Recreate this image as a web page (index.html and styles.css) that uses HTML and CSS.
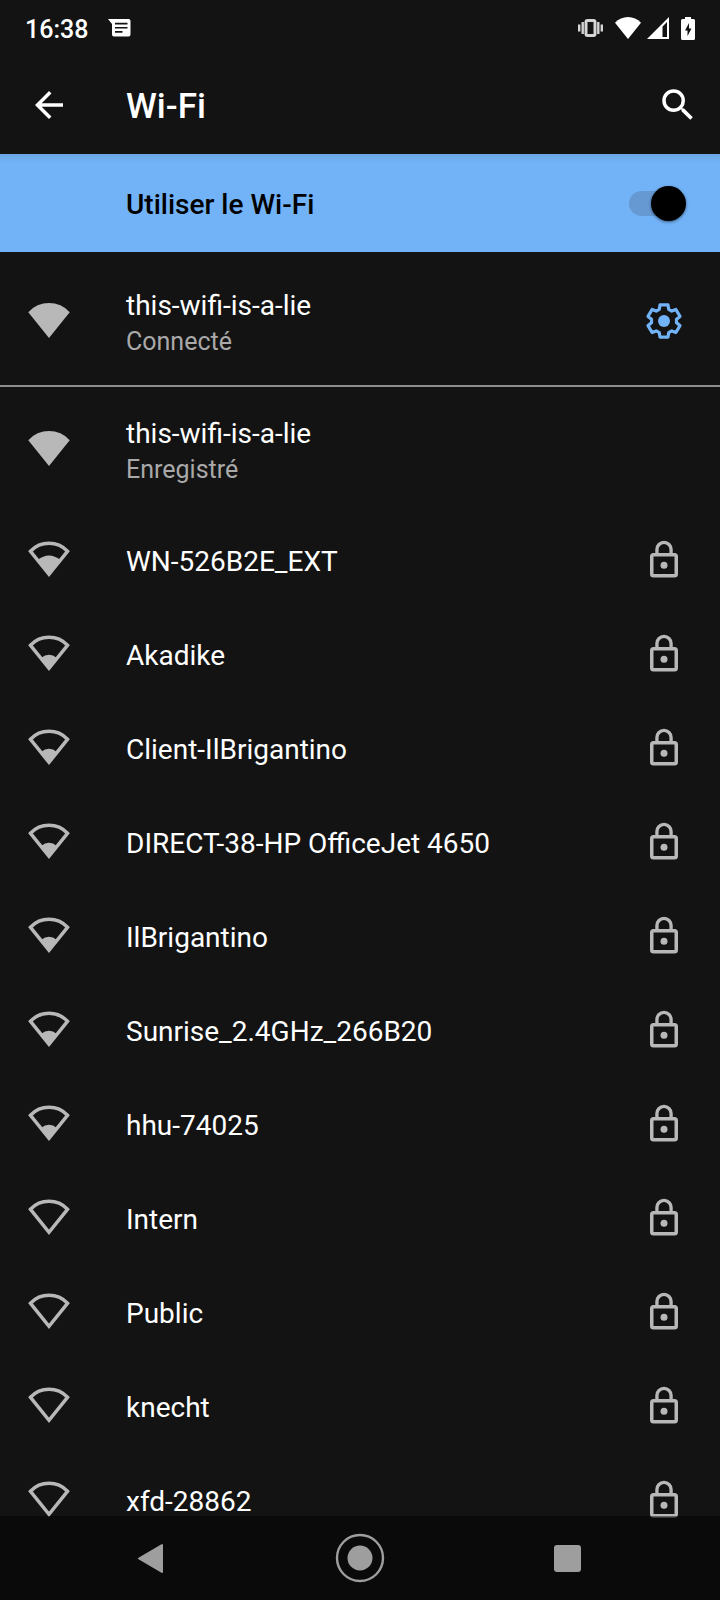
FILE: index.html
```html
<!DOCTYPE html>
<html lang="fr">
<head>
<meta charset="utf-8">
<meta name="viewport" content="width=device-width, initial-scale=1">
<title>Wi-Fi</title>
<link rel="stylesheet" href="styles.css">
</head>
<body>
<svg class="sprite" aria-hidden="true">
  <symbol id="wifi-4" viewBox="0 0 42 42"><path d="M.3 12.300A27.500 27.500 0 0 1 41.700 12.300L21 38z"/></symbol>
  <symbol id="wifi-0" viewBox="0 0 42 42"><path fill="none" stroke="currentColor" stroke-width="3.500" d="M2.500 12.300A25.500 25.500 0 0 1 39.500 12.300L21 35.300z"/></symbol>
  <symbol id="wifi-1" viewBox="0 0 42 42"><use href="#wifi-0"/><path d="M13 25Q21 18.500 29 25L21 36z"/></symbol>
  <symbol id="wifi-2" viewBox="0 0 42 42"><use href="#wifi-0"/><path d="M9.500 21Q21 12 32.500 21L21 36z"/></symbol>
  <symbol id="lock" viewBox="0 0 24 24"><path fill-rule="evenodd" d="M18 8h-1V6A5 5 0 0 0 7 6v2H6a2 2 0 0 0-2 2v10a2 2 0 0 0 2 2h12a2 2 0 0 0 2-2V10a2 2 0 0 0-2-2zM8.900 6a3.100 3.100 0 0 1 6.200 0v2H8.900zM18 20H6V10h12z"/><circle cx="12" cy="15" r="2"/></symbol>
</svg>

<header>
  <div class="status">
    <time>16:38</time>
    <svg class="chat" viewBox="0 0 23 18" aria-hidden="true"><path fill-rule="evenodd" d="M0 0H20.500A2 2 0 0 1 22.500 2V15.500A2 2 0 0 1 20.500 17.500H6A2 2 0 0 1 4 15.500V5zM7 3.800V5.500H19.500V3.800zM7 7.900V9.600H19.500V7.900zM7 12V13.700H14.500V12z"/></svg>
    <div class="indicators">
      <svg class="vibrate" viewBox="0 0 25 18" aria-hidden="true"><path fill="none" stroke="currentColor" stroke-width="2.400" d="M1.200 5.500v7M4.700 3v12M20.300 3v12M23.800 5.500v7"/><rect x="8" y="1.500" width="9" height="15" rx="1.500" fill="none" stroke="currentColor" stroke-width="3"/></svg>
      <div class="network">
        <svg class="st-wifi" viewBox="0 0 26 22" aria-hidden="true"><path d="M0 5.800A17.500 17.500 0 0 1 26 5.800L13 22z"/></svg>
        <svg class="st-signal" viewBox="0 0 22 22" aria-hidden="true"><path fill-rule="evenodd" d="M22 0V22H0zM15.500 9.500V20H20V5z"/></svg>
      </div>
      <svg class="battery" viewBox="0 0 14 23" aria-hidden="true"><path fill-rule="evenodd" d="M4 0h6v2h2.500A1.500 1.500 0 0 1 14 3.500v18a1.500 1.500 0 0 1-1.500 1.500h-11A1.500 1.500 0 0 1 0 21.500v-18A1.500 1.500 0 0 1 1.500 2H4zM8 6L4 13.500h2.500V19l4-7.500H8z"/></svg>
    </div>
  </div>
  <div class="appbar">
    <button class="icon-button" aria-label="Retour"><svg class="icon" viewBox="0 0 24 24"><path d="M20 11H7.830l5.590-5.590L12 4l-8 8 8 8 1.410-1.410L7.830 13H20z"/></svg></button>
    <h1>Wi-Fi</h1>
    <button class="icon-button" aria-label="Rechercher"><svg class="icon" viewBox="0 0 24 24"><path d="M15.500 14h-.79l-.28-.27A6.470 6.470 0 0 0 16 9.500 6.500 6.500 0 1 0 9.500 16c1.610 0 3.090-.59 4.230-1.570l.27.28v.79l5 4.990L20.490 19zM9.500 14a4.500 4.500 0 1 1 0-9 4.500 4.500 0 0 1 0 9z"/></svg></button>
  </div>
</header>

<main>
  <div class="switchbar">
    <label for="use-wifi">Utiliser le Wi-Fi</label>
    <input type="checkbox" role="switch" id="use-wifi" checked>
  </div>
  <ul class="networks">
    <li class="row tall">
      <svg class="icon"><use href="#wifi-4"/></svg>
      <div class="text"><p class="name">this-wifi-is-a-lie</p><p class="state">Connecté</p></div>
      <button class="icon-button gear" aria-label="Paramètres du réseau"><svg class="icon" viewBox="0 0 42 42"><path fill="none" stroke="currentColor" stroke-width="3.200" stroke-linejoin="round" d="M16.300 9.300L17 4.900H25L25.700 9.300L28.800 11.100L32.900 9.500L37 16.400L33.500 19.200V22.800L37 25.600L32.900 32.500L28.800 30.900L25.700 32.700L25 37.100H17L16.300 32.700L13.200 30.900L9.100 32.500L5 25.600L8.500 22.800V19.200L5 16.400L9.100 9.500L13.200 11.100z"/><circle cx="21" cy="21" r="6"/></svg></button>
    </li>
    <li class="row tall divided">
      <svg class="icon"><use href="#wifi-4"/></svg>
      <div class="text"><p class="name">this-wifi-is-a-lie</p><p class="state">Enregistré</p></div>
    </li>
    <li class="row"><svg class="icon"><use href="#wifi-2"/></svg><p class="text name">WN-526B2E_EXT</p><svg class="icon"><use href="#lock"/></svg></li>
    <li class="row"><svg class="icon"><use href="#wifi-1"/></svg><p class="text name">Akadike</p><svg class="icon"><use href="#lock"/></svg></li>
    <li class="row"><svg class="icon"><use href="#wifi-1"/></svg><p class="text name">Client-IlBrigantino</p><svg class="icon"><use href="#lock"/></svg></li>
    <li class="row"><svg class="icon"><use href="#wifi-1"/></svg><p class="text name">DIRECT-38-HP OfficeJet 4650</p><svg class="icon"><use href="#lock"/></svg></li>
    <li class="row"><svg class="icon"><use href="#wifi-1"/></svg><p class="text name">IlBrigantino</p><svg class="icon"><use href="#lock"/></svg></li>
    <li class="row"><svg class="icon"><use href="#wifi-1"/></svg><p class="text name">Sunrise_2.4GHz_266B20</p><svg class="icon"><use href="#lock"/></svg></li>
    <li class="row"><svg class="icon"><use href="#wifi-1"/></svg><p class="text name">hhu-74025</p><svg class="icon"><use href="#lock"/></svg></li>
    <li class="row"><svg class="icon"><use href="#wifi-0"/></svg><p class="text name">Intern</p><svg class="icon"><use href="#lock"/></svg></li>
    <li class="row"><svg class="icon"><use href="#wifi-0"/></svg><p class="text name">Public</p><svg class="icon"><use href="#lock"/></svg></li>
    <li class="row"><svg class="icon"><use href="#wifi-0"/></svg><p class="text name">knecht</p><svg class="icon"><use href="#lock"/></svg></li>
    <li class="row"><svg class="icon"><use href="#wifi-0"/></svg><p class="text name">xfd-28862</p><svg class="icon"><use href="#lock"/></svg></li>
  </ul>
</main>

<nav class="navbar" aria-label="Navigation système">
  <button aria-label="Retour"><svg class="nav-icon" viewBox="0 0 50 50"><path stroke="currentColor" stroke-width="2" stroke-linejoin="round" d="M35 12v27L12 25.500z"/></svg></button>
  <button aria-label="Accueil"><svg class="nav-icon" viewBox="0 0 50 50"><circle cx="25" cy="25" r="23" fill="none" stroke="currentColor" stroke-width="2.400"/><circle cx="25" cy="25" r="12.500"/></svg></button>
  <button aria-label="Applications récentes"><svg class="nav-icon" viewBox="0 0 50 50"><rect x="11" y="12" width="27" height="27" rx="3"/></svg></button>
</nav>
</body>
</html>
```
FILE: styles.css
```css
* {
  box-sizing: border-box;
}

body {
  margin: 0;
  min-height: 100vh;
  background: #131313;
  color: #fff;
  font-family: Roboto, "Liberation Sans", sans-serif;
  font-size: 28px;
  line-height: 36px;
}

h1, p, ul {
  margin: 0;
  padding: 0;
}

svg {
  display: block;
  flex: none;
  fill: currentColor;
}

button {
  padding: 0;
  border: 0;
  background: none;
  color: inherit;
}

.sprite {
  position: absolute;
  width: 0;
  height: 0;
}

.icon {
  width: 42px;
  height: 42px;
}

.icon-button {
  flex: none;
}

/* Status bar */
.status {
  display: flex;
  align-items: center;
  height: 56px;
  padding: 0 25px;
  font-size: 25px;
  font-weight: 500;
}

.status time {
  padding-top: 4px;
}

.chat {
  width: 23px;
  height: 18px;
  margin-left: 20px;
}

.indicators {
  display: flex;
  align-items: center;
  gap: 12px;
  margin-left: auto;
}

.network {
  display: flex;
  gap: 6px;
}

.vibrate {
  width: 25px;
  height: 18px;
  color: #d6d6d6;
}

.st-wifi {
  width: 26px;
  height: 22px;
}

.st-signal {
  width: 22px;
  height: 22px;
}

.battery {
  width: 14px;
  height: 23px;
}

/* App bar */
.appbar {
  display: flex;
  align-items: center;
  gap: 56px;
  height: 98px;
  padding: 0 21px 0 28px;
}

.appbar h1 {
  flex: 1;
  padding-top: 4px;
  font-size: 35px;
  font-weight: 500;
  line-height: 42px;
}

/* Main switch */
.switchbar {
  display: flex;
  align-items: center;
  justify-content: space-between;
  height: 98px;
  padding: 0 34px 0 126px;
  background: linear-gradient(#6aa6e6, #72b2f6 8px);
  color: #000;
  font-weight: 500;
}

.switchbar label {
  padding-top: 4px;
}

.switchbar input {
  position: relative;
  width: 57px;
  height: 25px;
  margin: 0;
  appearance: none;
  border-radius: 13px;
  background: #6699d2;
}

.switchbar input::before {
  content: "";
  position: absolute;
  top: -5px;
  right: 0;
  width: 35px;
  height: 35px;
  border-radius: 50%;
  background: #000;
  box-shadow: 0 1px 3px rgba(0, 0, 0, 0.5);
}

.switchbar input:not(:checked)::before {
  right: 22px;
}

/* Network list */
.networks {
  padding-top: 5px;
  list-style: none;
}

.row {
  display: flex;
  align-items: center;
  gap: 56px;
  height: 94px;
  padding: 0 35px 0 28px;
  color: #b8b8b8;
}

.tall {
  height: 128px;
}

.divided {
  box-shadow: inset 0 2px #8e8e8e;
}

.text {
  flex: 1;
  padding-top: 3px;
}

.tall .text {
  padding-top: 5px;
}

.name {
  color: #fff;
}

.state {
  color: #a9a9a9;
  font-size: 25px;
}

.gear {
  color: #72b2f6;
}

/* System navigation, translucent over the list */
.navbar {
  position: fixed;
  right: 0;
  bottom: 0;
  left: 0;
  display: flex;
  justify-content: center;
  height: 84px;
  background: rgba(0, 0, 0, 0.45);
  color: #9e9e9e;
}

.navbar button {
  display: flex;
  flex: 0 1 208px;
  align-items: center;
  justify-content: center;
}

.nav-icon {
  width: 50px;
  height: 50px;
}
```
